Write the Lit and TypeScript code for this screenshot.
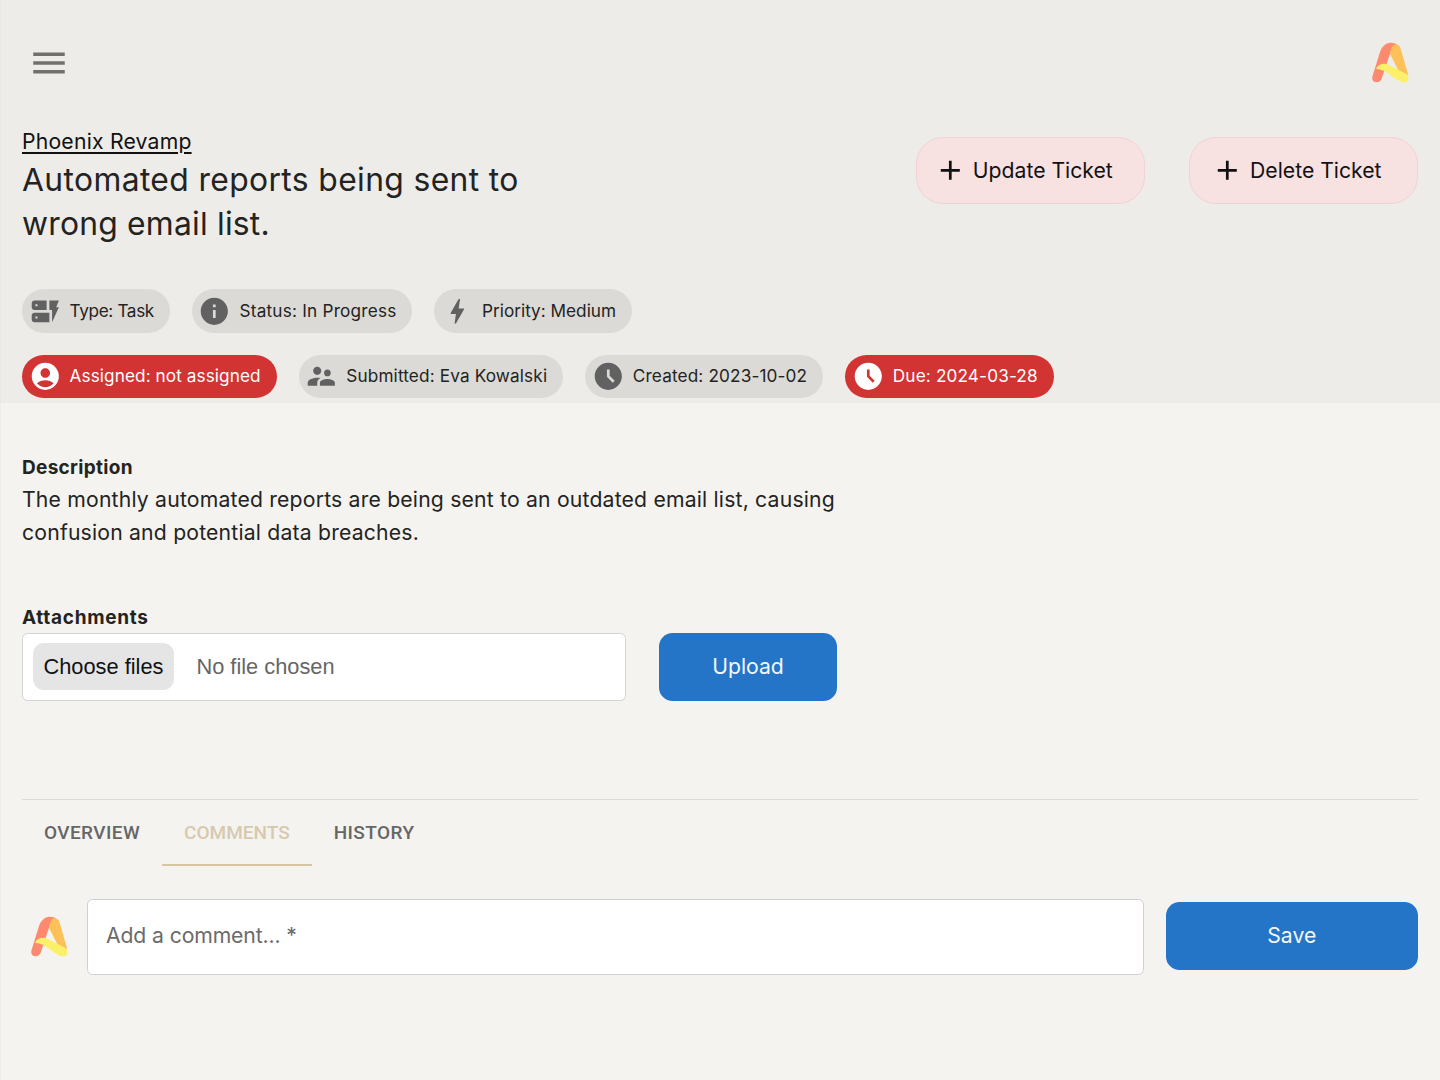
import { LitElement, html, css, svg } from "lit";
import { customElement } from "lit/decorators.js";

const ICONS: Record<string, string> = {
  menu: "M3 18h18v-2H3zm0-5h18v-2H3zm0-7v2h18V6z",
  add: "M19 13h-6v6h-2v-6H5v-2h6V5h2v6h6z",
  form: "M17 20v-9h-2V4h7l-2 5h2zm-2-7v7H4c-1.1 0-2-.9-2-2v-3c0-1.1.9-2 2-2zm-8.75 2.75h-1.5v1.5h1.5zM13 4v7H4c-1.1 0-2-.9-2-2V6c0-1.1.9-2 2-2zM6.25 6.75h-1.5v1.5h1.5z",
  info: "M12 2C6.48 2 2 6.48 2 12s4.48 10 10 10 10-4.48 10-10S17.52 2 12 2m1 15h-2v-6h2zm0-8h-2V7h2z",
  bolt: "M11 21h-1l1-7H7.5c-.58 0-.57-.32-.38-.66.19-.34.05-.08.07-.12C8.48 10.94 10.42 7.54 13 3h1l-1 7h3.5c.49 0 .56.33.47.51l-.07.15C12.96 17.55 11 21 11 21",
  account: "M12 2C6.48 2 2 6.48 2 12s4.48 10 10 10 10-4.48 10-10S17.52 2 12 2m0 4c1.93 0 3.5 1.57 3.5 3.5S13.93 13 12 13s-3.5-1.57-3.5-3.5S10.07 6 12 6m0 14c-2.03 0-4.43-.82-6.14-2.88C7.55 15.8 9.68 15 12 15s4.45.8 6.14 2.12C16.43 19.18 14.03 20 12 20",
  people: "M16.5 12c1.38 0 2.49-1.12 2.49-2.5S17.88 7 16.5 7 14 8.12 14 9.5s1.12 2.5 2.5 2.5M9 11c1.66 0 2.99-1.34 2.99-3S10.66 5 9 5 6 6.34 6 8s1.34 3 3 3m7.5 3c-1.83 0-5.5.92-5.5 2.75V19h11v-2.25c0-1.83-3.67-2.75-5.5-2.75M9 13c-2.33 0-7 1.17-7 3.5V19h7v-2.25c0-.85.33-2.34 2.37-3.47C10.5 13.1 9.66 13 9 13",
  clock: "M11.99 2C6.47 2 2 6.48 2 12s4.47 10 9.99 10C17.52 22 22 17.52 22 12S17.52 2 11.99 2m3.3 14.71L11 12.41V7h2v4.59l3.71 3.71z",
};

const icon = (name: string) =>
  html`<svg class="icon" viewBox="0 0 24 24" aria-hidden="true">${svg`<path d=${ICONS[name]} />`}</svg>`;

const logo = () => html`<svg class="logo" viewBox="95 60 120 135" aria-hidden="true">
  <path fill="#fd8a6f" d="M99 170L122 96C130 74 143 68 155 68C163 68 170 70 174 74C164 76 157 86 153 98L127 176C121 192 96 190 99 170Z" />
  <path fill="#fec15a" d="M152 101C154 82 162 72 171 73C180 75 183 82 185 90L207 166L178 153Z" />
  <path fill="#fbf06a" d="M110 147C118 130 136 128 150 136L200 161C213 170 208 188 194 187C186 187 178 182 165 174C150 163 135 148 110 147Z" />
</svg>`;

interface Chip {
  icon: string;
  label: string;
  tone: string;
}

const TOP_CHIPS: Chip[] = [
  { icon: "form", label: "Type: Task", tone: "tight" },
  { icon: "info", label: "Status: In Progress", tone: "wide" },
  { icon: "bolt", label: "Priority: Medium", tone: "" },
];

const BOTTOM_CHIPS: Chip[] = [
  { icon: "account", label: "Assigned: not assigned", tone: "red snug" },
  { icon: "people", label: "Submitted: Eva Kowalski", tone: "loose" },
  { icon: "clock", label: "Created: 2023-10-02", tone: "loose" },
  { icon: "clock", label: "Due: 2024-03-28", tone: "red loose" },
];

const chip = (c: Chip) => html`<div class="chip ${c.tone}">${icon(c.icon)}<span>${c.label}</span></div>`;

@customElement("app-root")
export class AppRoot extends LitElement {
  static styles = css`
    :host { display: block; height: 1080px; box-sizing: border-box; background: #f5f3ef; box-shadow: inset 1px 0 0 #efede9; color: #232322; font: 400 21.2px/32.6px Inter, sans-serif; white-space: nowrap; }
    .icon { width: 32.6px; height: 32.6px; fill: currentColor; flex: none; display: block; }
    .logo { width: 40px; height: 45px; display: block; flex: none; }
    header { background: #eeece8; box-shadow: inset 1px 0 0 #e9e7e3; height: 402.5px; box-sizing: border-box; padding: 0 22px; }
    .bar { display: flex; justify-content: space-between; padding: 40px 7px 0 6px; }
    .menu { width: 42px; height: 42px; color: #71706e; margin-top: 1.5px; }
    .menu .icon { width: 42px; height: 42px; }
    .head { display: flex; justify-content: space-between; align-items: flex-start; padding-top: 40px; height: 119px; }
    .project { display: block; color: #111; letter-spacing: 0.2px; text-decoration: underline; text-underline-offset: 3px; text-decoration-thickness: 1.5px; }
    h1 { font-size: 31.8px; line-height: 44px; font-weight: 400; margin: 0; letter-spacing: 0.38px; }
    .last { letter-spacing: 0.22px; }
    .actions { display: flex; gap: 44px; padding-top: 11.6px; }
    .action { display: flex; align-items: center; justify-content: center; gap: 6px; width: 229px; height: 67.8px; box-sizing: border-box; border: 1.4px solid #f0d3d5; border-radius: 27px; background: #f8e1e1; color: #111; padding: 0 14px 0 0; font: inherit; }
    .chips { display: flex; gap: 22px; margin-top: 45.4px; }
    .chips + .chips { margin-top: 21.8px; }
    .chip { height: 43.5px; border-radius: 22px; background: #dbdad6; display: flex; align-items: center; padding: 0 16px 0 6.5px; gap: 8.5px; font-size: 17.2px; box-sizing: border-box; }
    .chip .icon { color: #616161; }
    .chip span { padding-top: 0.6px; }
    .red { background: #d13432; color: #fff; }
    .chip.red .icon { color: #fff; }
    .tight { letter-spacing: -0.37px; }
    .wide { letter-spacing: 0.21px; }
    .snug { letter-spacing: 0.08px; }
    .loose { letter-spacing: 0.14px; }
    main { padding: 49.5px 22px 0 22px; }
    h2 { font-size: 19px; line-height: 32.6px; font-weight: 700; margin: 0; letter-spacing: 0.31px; }
    .body { letter-spacing: 0.185px; margin-top: -1.3px; }
    .attach { margin: 53.8px 0 -2px; letter-spacing: 0.7px; }
    .row { display: flex; }
    .file { display: flex; align-items: center; width: 604px; height: 68px; box-sizing: border-box; background: #fff; border: 1.4px solid #d2d3d4; border-radius: 5.5px; padding-left: 9.5px; gap: 22px; font-family: "Liberation Sans", Arial, sans-serif; font-size: 21.8px; color: #666; margin-right: 33px; }
    .choose { background: #e5e5e5; border-radius: 11px; height: 47px; padding: 0 11px; display: flex; align-items: center; color: #111; }
    .blue { background: #2475c8; border: 0; border-radius: 13.6px; height: 68px; font: inherit; padding: 0 0 1.4px; color: #f2f7fc; }
    .upload { width: 178px; }
    .save { width: 252.5px; margin-bottom: 2.6px; }
    .tabs { display: flex; border-top: 1.4px solid #dcdbd7; margin-top: 98px; height: 67px; box-sizing: border-box; font-family: Roboto, sans-serif; }
    .tab { padding: 0 22px; line-height: 65px; font-size: 19px; font-weight: 500; color: #666; letter-spacing: 0.41px; border-bottom: 2.7px solid transparent; box-sizing: border-box; }
    .tab.on { color: #d7c9af; border-color: #d7c4a0; letter-spacing: 0; }
    .comment { display: flex; align-items: center; margin-top: 33px; padding-left: 8px; }
    .input { flex: 1; height: 76px; box-sizing: border-box; background: #fff; border: 1.4px solid #cfd0d2; border-radius: 5.5px; margin: 0 22px 0 17px; padding: 0 0 3px 18px; display: flex; align-items: center; color: #6b6b6b; letter-spacing: -0.12px; }
  `;

  render() {
    return html`
      <header>
        <div class="bar"><div class="menu">${icon("menu")}</div>${logo()}</div>
        <div class="head">
          <div>
            <a class="project"><span>Phoenix Revamp</span></a>
            <h1>Automated reports being sent to<br /><span class="last">wrong email list.</span></h1>
          </div>
          <div class="actions">
            <button class="action">${icon("add")}<span>Update Ticket</span></button>
            <button class="action">${icon("add")}<span>Delete Ticket</span></button>
          </div>
        </div>
        <div class="chips">${TOP_CHIPS.map(chip)}</div>
        <div class="chips">${BOTTOM_CHIPS.map(chip)}</div>
      </header>
      <main>
        <h2>Description</h2>
        <div class="body">The monthly automated reports are being sent to an outdated email list, causing<br />confusion and potential data breaches.</div>
        <h2 class="attach">Attachments</h2>
        <div class="row">
          <div class="file"><div class="choose">Choose files</div><span>No file chosen</span></div>
          <button class="blue upload">Upload</button>
        </div>
        <div class="tabs">
          <div class="tab">OVERVIEW</div>
          <div class="tab on">COMMENTS</div>
          <div class="tab">HISTORY</div>
        </div>
        <div class="comment">
          ${logo()}
          <div class="input">Add a comment... *</div>
          <button class="blue save">Save</button>
        </div>
      </main>`;
  }
}
